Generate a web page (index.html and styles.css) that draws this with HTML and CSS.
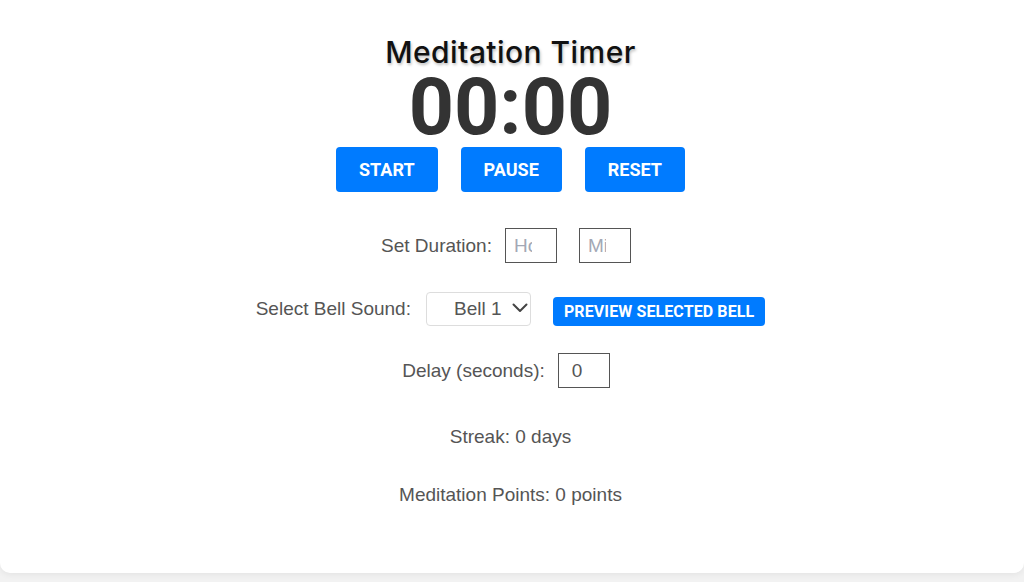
FILE: index.html
```html
<!DOCTYPE html>
<html lang="en">
<head>
<meta charset="utf-8">
<title>Meditation Timer</title>
<link rel="stylesheet" href="styles.css">
</head>
<body>
<main class="card">
  <h1 class="title">Meditation Timer</h1>
  <div class="timer">00:00</div>
  <div class="controls">
    <button class="btn">START</button>
    <button class="btn">PAUSE</button>
    <button class="btn">RESET</button>
  </div>
  <div class="row row-duration">
    <label class="label">Set Duration:</label>
    <input class="field" type="text" placeholder="Hours">
    <input class="field field-min" type="text" placeholder="Minutes">
  </div>
  <div class="row row-bell">
    <label class="label label-bell">Select Bell Sound:</label>
    <span class="select-wrap">
      <select class="select"><option>Bell 1</option><option>Bell 2</option></select>
      <svg class="chevron" width="16" height="10" viewBox="0 0 16 10"><path d="M1.5 1.5 L8 8 L14.5 1.5" fill="none" stroke="#444" stroke-width="2" stroke-linecap="round" stroke-linejoin="round"/></svg>
    </span>
    <button class="btn btn-small">PREVIEW SELECTED BELL</button>
  </div>
  <div class="row row-delay">
    <label class="label">Delay (seconds):</label>
    <input class="field field-delay" type="text" value="0">
  </div>
  <p class="stat stat-streak">Streak: 0 days</p>
  <p class="stat stat-points">Meditation Points: 0 points</p>
</main>
</body>
</html>
```

FILE: styles.css
```css
html, body {
  margin: 0;
  padding: 0;
  background: #f2f2f2;
}
body {
  font-family: "Liberation Sans", Arial, sans-serif;
  height: 582px;
  overflow: hidden;
}
.card {
  background: #fff;
  height: 573px;
  box-sizing: border-box;
  padding-top: 35px;
  padding-right: 3px;
  border-radius: 0 0 10px 10px;
  box-shadow: 0 2px 6px rgba(0,0,0,0.06);
  display: flex;
  flex-direction: column;
  align-items: center;
}
.title {
  margin: 0;
  font-family: "Inter", "Noto Sans", sans-serif;
  font-weight: 500;
  font-size: 30px;
  line-height: 34px;
  color: #111;
  text-shadow: 1px 2px 3px rgba(0,0,0,0.25);
  letter-spacing: 0.45px;
}
.timer {
  font-family: Roboto, sans-serif;
  font-weight: 700;
  font-size: 79px;
  line-height: 76px;
  color: #333;
}
.controls {
  display: flex;
  gap: 23px;
  margin-top: 2px;
}
.btn {
  font-family: Roboto, sans-serif;
  font-weight: 700;
  font-size: 18px;
  color: #fff;
  background: #007bff;
  border: none;
  border-radius: 4px;
  height: 45px;
  padding: 0 23px;
  cursor: pointer;
}
.row {
  display: flex;
  align-items: center;
  color: #555;
  font-size: 19px;
}
.row-duration { margin-top: 36px; height: 35px; }
.row-bell { margin-top: 28px; height: 35px; }
.row-delay { margin-top: 27px; height: 35px; }
.label { margin-right: 13px; }
.label-bell { margin-right: 15px; }
.field {
  box-sizing: border-box;
  width: 52px;
  height: 35px;
  border: 1px solid #555;
  padding: 0 24px 0 8px;
  font-family: "Liberation Sans", Arial, sans-serif;
  font-size: 19px;
  color: #555;
  background: #fff;
  outline: none;
}
.field::placeholder { color: #a3a8b5; }
.field-min { margin-left: 22px; margin-right: 9px; }
.field-delay { padding-left: 13px; margin-right: 9px; }
.select-wrap {
  position: relative;
  display: inline-block;
  height: 34px;
}
.select {
  appearance: none;
  -webkit-appearance: none;
  box-sizing: border-box;
  width: 105px;
  height: 34px;
  border: 1px solid #ddd;
  border-radius: 4px;
  background: #fff;
  padding: 0 0 0 27px;
  font-family: "Liberation Sans", Arial, sans-serif;
  font-size: 19px;
  color: #555;
  outline: none;
}
.chevron {
  position: absolute;
  right: 3px;
  top: 11px;
  pointer-events: none;
}
.btn-small {
  margin-left: 22px;
  height: 29px;
  font-size: 16px;
  letter-spacing: 0.1px;
  padding: 0 11px;
  margin-top: 6px;
}
.stat {
  margin: 0;
  color: #555;
  font-size: 19px;
  line-height: 22px;
}
.stat-streak { margin-top: 38px; }
.stat-points { margin-top: 36px; }
```
